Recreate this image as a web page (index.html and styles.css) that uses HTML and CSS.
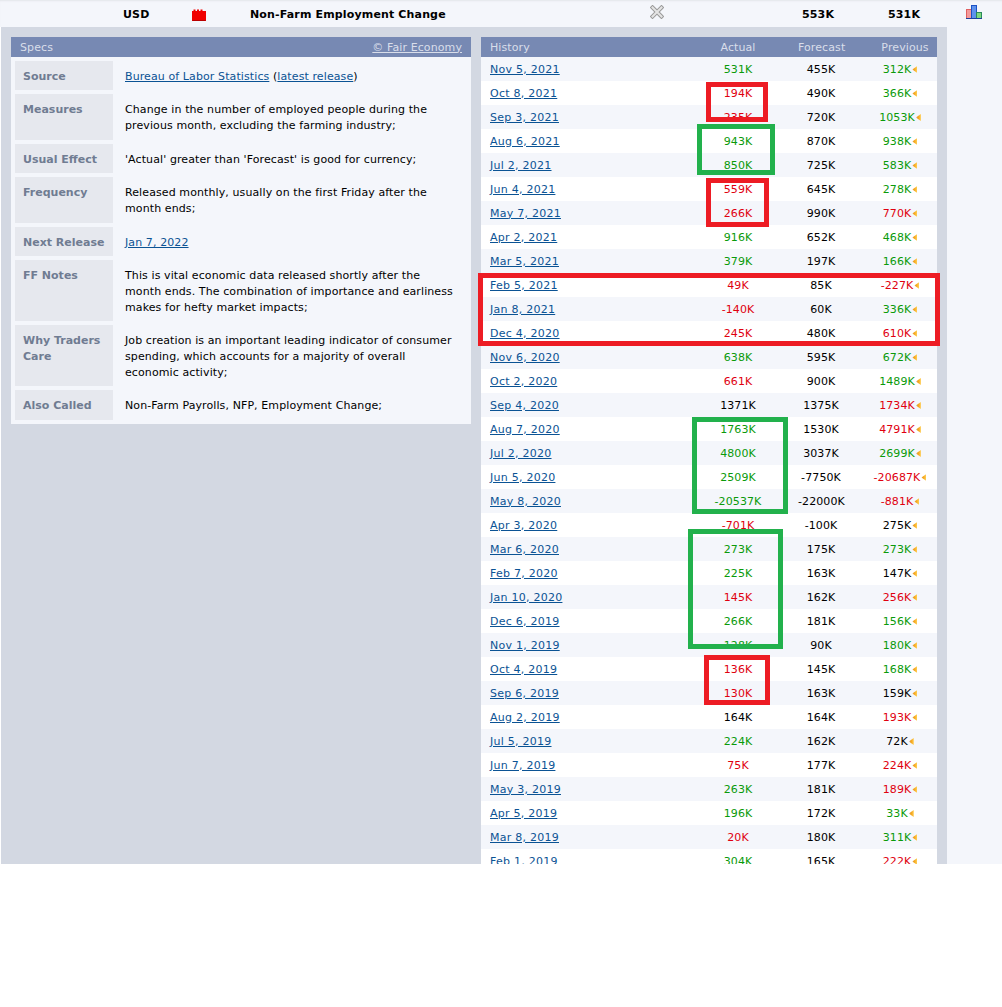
FILE: index.html
```html
<!DOCTYPE html>
<html lang="en">
<head>
<meta charset="utf-8">
<title>Non-Farm Employment Change</title>
<link rel="stylesheet" href="styles.css">
</head>
<body>
<div class="page">
  <div class="summary">
    <span class="s-cur">USD</span>
    <span class="s-impact"><svg width="14" height="12" viewBox="0 0 14 12"><path d="M0 2h1.500V0.500h2V2h1.500V0.500h2V2h1.500V0.500h2V2H14v10H0z" fill="#f00000"/><path d="M0.500 11.500h13" stroke="#b80000"/></svg></span>
    <span class="s-name">Non-Farm Employment Change</span>
    <span class="s-x"><svg width="14" height="14" viewBox="0 0 14 14"><path d="M2.500 2.500l9 9M11.500 2.500l-9 9" stroke="#999" stroke-width="4" stroke-linecap="square"/><path d="M2.500 2.500l9 9M11.500 2.500l-9 9" stroke="#e4e4e4" stroke-width="2" stroke-linecap="square"/></svg></span>
    <span class="s-fc">553K</span>
    <span class="s-pv">531K</span>
    <span class="s-chart"><svg width="16" height="14" viewBox="0 0 16 14"><rect x="0.500" y="4.500" width="5" height="9" fill="#f49a9a" stroke="#e06060"/><rect x="5.500" y="0.500" width="5" height="13" fill="#5f92ec" stroke="#1c52c4"/><rect x="10.500" y="7.500" width="5" height="6" fill="#7fd67f" stroke="#2a8a5a"/><path d="M0 13.500h16" stroke="#1c3f9c"/></svg></span>
  </div>
  <div class="body">
    <div class="details">
      <section class="specs">
        <header class="bar"><span>Specs</span><a href="#" class="bar-link">© Fair Economy</a></header>
        <div class="spec-list">
          <div class="spec"><div class="k">Source</div><div class="v"><a href="#">Bureau of Labor Statistics</a> (<a href="#">latest release</a>)</div></div>
          <div class="spec two"><div class="k">Measures</div><div class="v">Change in the number of employed people during the previous month, excluding the farming industry;</div></div>
          <div class="spec"><div class="k">Usual Effect</div><div class="v">'Actual' greater than 'Forecast' is good for currency;</div></div>
          <div class="spec two"><div class="k">Frequency</div><div class="v">Released monthly, usually on the first Friday after the month ends;</div></div>
          <div class="spec"><div class="k">Next Release</div><div class="v"><a href="#">Jan 7, 2022</a></div></div>
          <div class="spec"><div class="k">FF Notes</div><div class="v">This is vital economic data released shortly after the month ends. The combination of importance and earliness makes for hefty market impacts;</div></div>
          <div class="spec"><div class="k">Why Traders Care</div><div class="v">Job creation is an important leading indicator of consumer spending, which accounts for a majority of overall economic activity;</div></div>
          <div class="spec last"><div class="k">Also Called</div><div class="v">Non-Farm Payrolls, NFP, Employment Change;</div></div>
        </div>
      </section>
      <section class="history">
        <header class="bar hist-head"><span class="d">History</span><span class="n a">Actual</span><span class="n f">Forecast</span><span class="n hp">Previous</span></header>
        <div id="rows" class="rows"></div>
      </section>
    </div>
    <div class="side"></div>
    <i class="mark red m1"></i><i class="mark green m2"></i><i class="mark red m3"></i><i class="mark red m4"></i><i class="mark green m5"></i><i class="mark green m6"></i><i class="mark red m7"></i>
  </div>
</div>
<script src="app.js"></script>
</body>
</html>
```
FILE: styles.css
```css
* { box-sizing: border-box; }
html, body { margin: 0; background: #fff; }
body { font: 11px/16px "DejaVu Sans", Verdana, sans-serif; color: #000; letter-spacing: .1px; }
a { color: #0b5394; }
.page { width: 1002px; height: 864px; overflow: hidden; position: relative; }
.summary { height: 27px; padding-top: 2px; background: #f4f6fb; display: flex; align-items: center; font-weight: 700; letter-spacing: .15px; box-shadow: inset 0 2px 2px -1px #e3e5ea; }
.summary span { display: block; }
.s-cur { margin-left: 123px; width: 69px; }
.s-impact { width: 58px; height: 12px; line-height: 0; }
.s-name { width: 400px; }
.s-x { width: 152px; height: 14px; line-height: 0; position: relative; top: -3px; }
.s-fc { width: 86px; }
.s-pv { width: 78px; }
.s-chart { height: 14px; line-height: 0; position: relative; top: -3px; }
.body { display: flex; height: 837px; position: relative; }
.details { width: 946px; margin-left: 1px; background: #d3d8e2; padding: 10px 10px 0; display: flex; gap: 10px; }
.side { width: 55px; background: #f4f6fb; }
.bar { height: 20px; padding: 1px 9px 0; background: #7789b3; color: #d9deea; display: flex; justify-content: space-between; align-items: center; }
.bar-link { color: #d9deea; }
.specs { width: 460px; align-self: flex-start; background: #f4f6fb; }
.spec-list { padding: 4px; display: flex; flex-direction: column; gap: 4px; }
.spec { display: flex; }
.spec.two { min-height: 46px; }
.spec.last { min-height: 30px; }
.k { width: 98px; flex: none; background: #e6e8ee; color: #707c92; font-weight: 700; letter-spacing: 0; padding: 8px 4px 5px 8px; }
.v { flex: 1; padding: 8px 11px 5px 12px; }
.history { width: 456px; background: #fff; }
.hist-head { justify-content: flex-start; padding: 1px 0 0; }
.d { width: 197px; padding-left: 9px; }
.row .d { letter-spacing: .25px; }
.n { text-align: center; }
.a { width: 120px; }
.f { width: 46px; flex: none; }
.hp { width: 93px; padding-left: 29px; white-space: nowrap; }
.row { height: 24px; padding-top: 1px; display: flex; align-items: center; background: #f4f6fb; }
.row:nth-child(even) { background: #fff; }
.p { width: 93px; padding-left: 19px; display: flex; justify-content: center; align-items: center; gap: 1px; white-space: nowrap; }
.good { color: #0a9a0a; }
.bad { color: #e0000f; }
.tri { flex: none; width: 5px; height: 7px; background: linear-gradient(to right, #c9c9d2, #f29c10 35%, #ffcf55); clip-path: polygon(100% 0, 100% 100%, 0 50%); }
.mark { position: absolute; border: 5px solid; display: block; }
.red { border-color: #ed1c24; }
.green { border-color: #22b14c; }
.m1 { left: 706px; top: 55px; width: 62px; height: 40px; }
.m2 { left: 697px; top: 97px; width: 78px; height: 51px; }
.m3 { left: 706px; top: 151px; width: 63px; height: 49px; }
.m4 { left: 478px; top: 246px; width: 462px; height: 73px; }
.m5 { left: 692px; top: 390px; width: 96px; height: 97px; }
.m6 { left: 688px; top: 502px; width: 95px; height: 120px; }
.m7 { left: 704px; top: 628px; width: 66px; height: 50px; }
```
FILE: app.js
```js
const data = `Nov 5, 2021|531K|g|455K|312K|g
Oct 8, 2021|194K|b|490K|366K|g
Sep 3, 2021|235K|b|720K|1053K|g
Aug 6, 2021|943K|g|870K|938K|g
Jul 2, 2021|850K|g|725K|583K|g
Jun 4, 2021|559K|b|645K|278K|g
May 7, 2021|266K|b|990K|770K|b
Apr 2, 2021|916K|g|652K|468K|g
Mar 5, 2021|379K|g|197K|166K|g
Feb 5, 2021|49K|b|85K|-227K|b
Jan 8, 2021|-140K|b|60K|336K|g
Dec 4, 2020|245K|b|480K|610K|b
Nov 6, 2020|638K|g|595K|672K|g
Oct 2, 2020|661K|b|900K|1489K|g
Sep 4, 2020|1371K|n|1375K|1734K|b
Aug 7, 2020|1763K|g|1530K|4791K|b
Jul 2, 2020|4800K|g|3037K|2699K|g
Jun 5, 2020|2509K|g|-7750K|-20687K|b
May 8, 2020|-20537K|g|-22000K|-881K|b
Apr 3, 2020|-701K|b|-100K|275K|n
Mar 6, 2020|273K|g|175K|273K|g
Feb 7, 2020|225K|g|163K|147K|n
Jan 10, 2020|145K|b|162K|256K|b
Dec 6, 2019|266K|g|181K|156K|g
Nov 1, 2019|128K|g|90K|180K|g
Oct 4, 2019|136K|b|145K|168K|g
Sep 6, 2019|130K|b|163K|159K|n
Aug 2, 2019|164K|n|164K|193K|b
Jul 5, 2019|224K|g|162K|72K|n
Jun 7, 2019|75K|b|177K|224K|b
May 3, 2019|263K|g|181K|189K|b
Apr 5, 2019|196K|g|172K|33K|g
Mar 8, 2019|20K|b|180K|311K|g
Feb 1, 2019|304K|g|165K|222K|b`;
const cls = { g: "good", b: "bad", n: "" };
document.getElementById("rows").innerHTML = data.split("\n").map(l => {
  const [d, a, ac, f, p, pc] = l.split("|");
  return `<div class="row"><span class="d"><a href="#">${d}</a></span><span class="n a ${cls[ac]}">${a}</span><span class="n f">${f}</span><span class="p"><span class="${cls[pc]}">${p}</span><i class="tri"></i></span></div>`;
}).join("");
```
